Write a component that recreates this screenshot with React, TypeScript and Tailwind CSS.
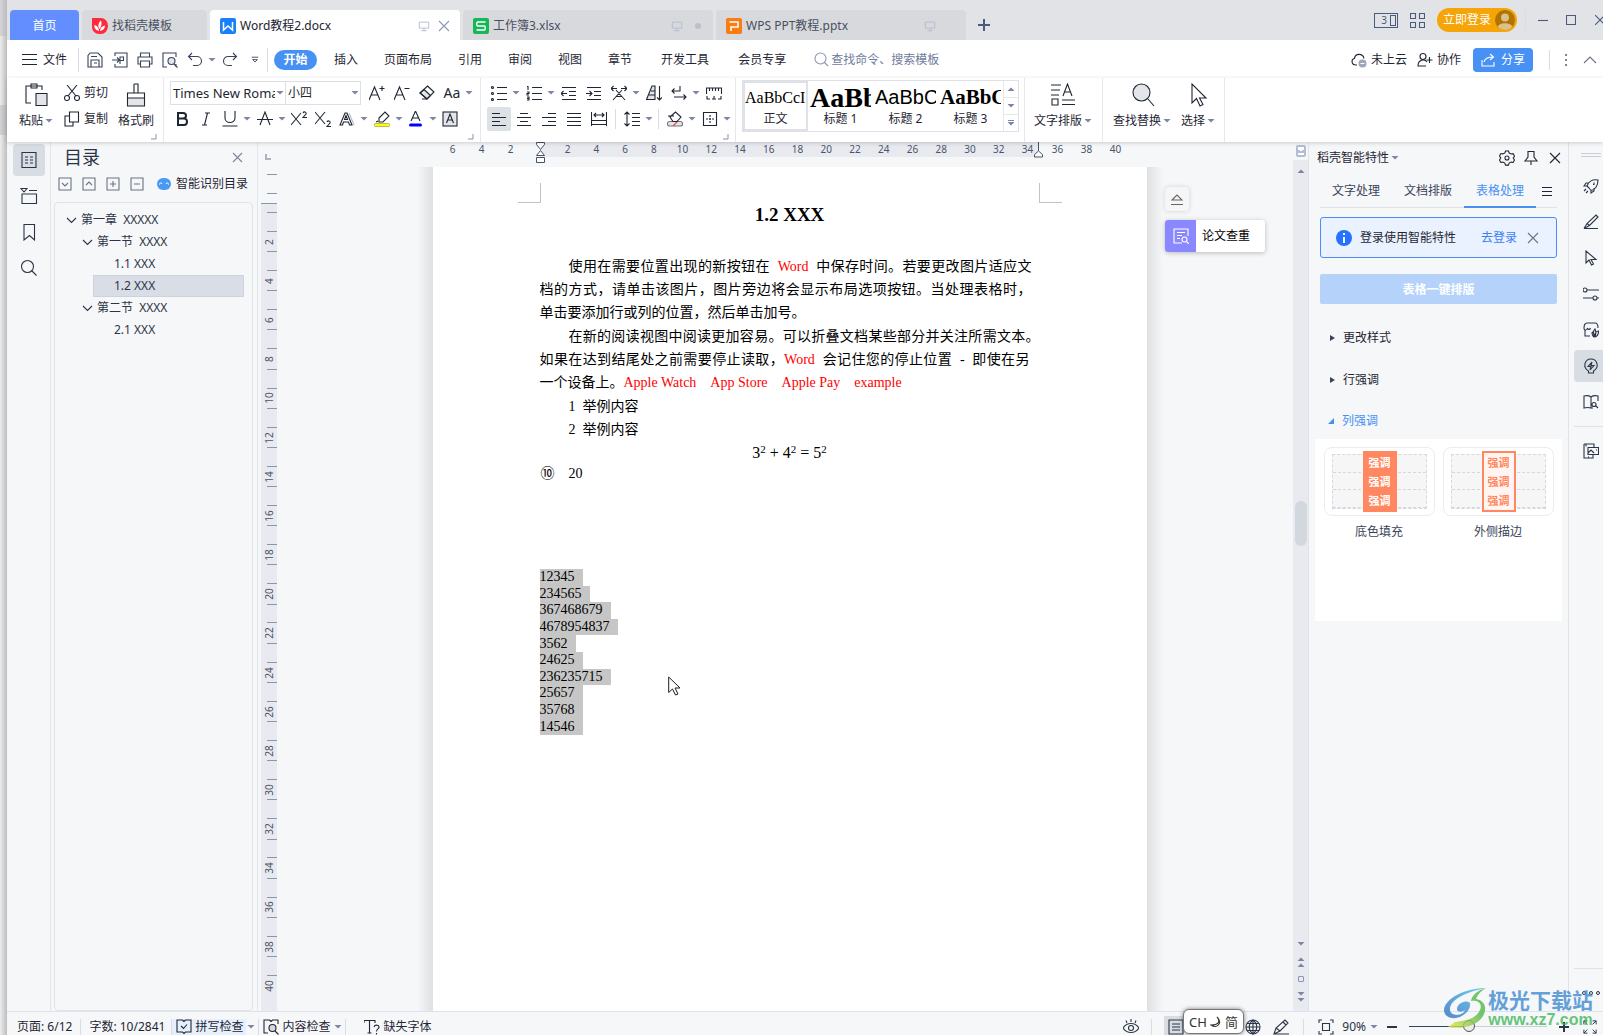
import type { ReactNode } from "react";

type IconProps = {
  d: string;
  size?: number;
  box?: number;
  className?: string;
  children?: ReactNode;
};

const Icon = ({ d, size = 16, box = 16, className = "", children }: IconProps) => (
  <svg
    width={size}
    height={size}
    viewBox={`0 0 ${box} ${box}`}
    fill="none"
    stroke="currentColor"
    strokeWidth="1.1"
    aria-hidden="true"
    className={`shrink-0 ${className}`}
  >
    {children}
    <path d={d} />
  </svg>
);

const Caret = ({ className = "" }: { className?: string }) => (
  <svg width="10" height="6" viewBox="0 0 10 6" aria-hidden="true" className={`shrink-0 fill-[#7a86a3] ${className}`}>
    <path d="M1.500 1h7L5 4.500z" />
  </svg>
);

const Divider = ({ className = "" }: { className?: string }) => (
  <span className={`w-px shrink-0 bg-[#d9dce2] ${className}`} />
);

const Tool = ({ label, caret, active, children }: { label: string; caret?: boolean; active?: boolean; children: ReactNode }) => (
  <button
    type="button"
    aria-label={label}
    className={`flex h-6 shrink-0 items-center ${caret ? "w-[34px]" : "w-6"} ${active ? "rounded-[2px] bg-[#dce1e6]" : ""}`}
  >
    <span className="flex w-6 shrink-0 items-center justify-center">{children}</span>
    {caret && <Caret />}
  </button>
);

const Launcher = () => (
  <svg width="6" height="6" viewBox="0 0 6 6" aria-hidden="true" className="mt-px self-end stroke-[#8c93a3]" fill="none">
    <path d="M5 0v5H0" />
  </svg>
);

/* ---------- title bar ---------- */

const Monitor = () => (
  <Icon d="M1.500 2.500h11v7h-11zM7 9.500v3M4 12.500h6" box={14} size={12} className="text-[#b4bccf]" />
);

const TitleBar = () => (
  <header className="flex h-10 shrink-0 items-end bg-[#e2e3e7] pl-[3px] text-[#48505f]">
    <div className="flex h-[30px] gap-[3px]">
      <button type="button" className="w-[69px] rounded-t-sm bg-[#628eff] pt-px text-white">首页</button>
      <button type="button" className="flex w-[125px] items-center gap-1 rounded-t-sm bg-[#d8d9dd] pt-px pl-[10px]">
        <svg width="16" height="16" viewBox="0 0 16 16" aria-hidden="true">
          <path d="M0 0h9a7 8 0 0 1 0 16H7a7 7 0 0 1-7-7z" fill="#ff2a3c" />
          <path d="M7 13C3 12 2 9 2.500 7 5 7.500 7 9.500 7 13zM7.500 11C5.500 8 6.500 4.500 9 2.500c1 3 .5 6-1.500 8.500zM8 13c0-3 2-5 5-5.500 0 3-2 5-5 5.500z" fill="#fff" />
        </svg>
        找稻壳模板
      </button>
      <div className="flex w-[250px] items-center rounded-t-sm bg-white pt-px pl-[10px] text-[#1c2230]">
        <svg width="16" height="16" viewBox="0 0 16 16" aria-hidden="true">
          <rect width="16" height="16" rx="2" fill="#1a80fa" />
          <path d="M3.500 4v8L8 8l4.500 4V4" fill="none" stroke="#fff" strokeWidth="1.500" />
        </svg>
        <span className="ml-1 flex-1">Word教程2.docx</span>
        <Monitor />
        <button type="button" aria-label="关闭文档" className="mr-[10px] ml-2 text-[#8d97b0]">
          <Icon d="M1 1l10 10M11 1L1 11" box={12} size={12} />
        </button>
      </div>
      <div className="flex w-[250px] items-center rounded-t-sm bg-[#d8d9dd] pt-px pl-[10px]">
        <svg width="16" height="16" viewBox="0 0 16 16" aria-hidden="true">
          <rect width="16" height="16" rx="2" fill="#16b757" />
          <path d="M12.500 4H4.500C3.500 4 3.500 8 4.500 8h7c1 0 1 4 0 4h-8" fill="none" stroke="#fff" strokeWidth="1.500" />
        </svg>
        <span className="ml-1 flex-1">工作簿3.xlsx</span>
        <Monitor />
        <span className="mr-3 ml-3 size-[6px] rounded-full bg-[#b9c0d2]" />
      </div>
      <div className="flex w-[250px] items-center rounded-t-sm bg-[#d8d9dd] pt-px pl-[10px]">
        <svg width="16" height="16" viewBox="0 0 16 16" aria-hidden="true">
          <rect width="16" height="16" rx="2" fill="#f97d12" />
          <path d="M3.500 4h8.500v5H5v4" fill="none" stroke="#fff" strokeWidth="1.500" />
        </svg>
        <span className="ml-1 flex-1">WPS PPT教程.pptx</span>
        <Monitor />
        <span className="w-[30px]" />
      </div>
    </div>
    <button type="button" aria-label="新建" className="flex h-[30px] w-9 items-center justify-center text-[#4a5b7c]">
      <Icon d="M6 0v12M0 6h12" box={12} size={12} className="[stroke-width:2]" />
    </button>
    <div className="flex h-10 min-w-0 flex-1 items-center justify-end overflow-hidden text-[#4a5b7c]">
      <span className="flex h-[15px] w-6 items-center justify-end border border-[#4a5b7c] pr-px text-[10px]">
        3<span className="ml-[3px] h-[11px] w-[6px] border border-[#4a5b7c]" />
      </span>
      <Icon d="M.5.5h5v5h-5zM9.500.5h5v5h-5zM.5 9.500h5v5h-5zM9.500 9.500h5v5h-5z" box={15} size={15} className="ml-3" />
      <button type="button" className="ml-3 flex h-6 w-20 shrink-0 items-center justify-between rounded-full bg-[#f5a508] pr-[2px] pl-[6px] text-white">
        立即登录
        <svg width="20" height="20" viewBox="0 0 20 20" aria-hidden="true">
          <circle cx="10" cy="10" r="10" fill="#b07400" />
          <circle cx="10" cy="7.500" r="4" fill="#dcc08c" />
          <path d="M3 17c0-5 14-5 14 0-4 4-10 4-14 0z" fill="#dcc08c" />
        </svg>
      </button>
      <Divider className="ml-2 h-5 bg-[#c9cbd2]" />
      <button type="button" aria-label="最小化" className="ml-3"><Icon d="M0 5.500h10" box={10} size={10} /></button>
      <button type="button" aria-label="最大化" className="ml-[18px]"><Icon d="M.5.5h9v9h-9z" box={10} size={10} /></button>
      <button type="button" aria-label="关闭" className="-mr-[2px] ml-[19px]"><Icon d="M0 0l10 10M10 0L0 10" box={10} size={10} /></button>
    </div>
  </header>
);

/* ---------- menu row ---------- */

const menus = ["插入", "页面布局", "引用", "审阅", "视图", "章节"];

const MenuRow = () => (
  <div className="flex h-[38px] shrink-0 items-center bg-white pt-px text-[#1f2633]">
    <button type="button" className="flex items-center gap-[6px] pl-[15px]">
      <Icon d="M0 2.500h15M0 7.500h15M0 12.500h15" box={15} size={15} />
      文件
    </button>
    <Divider className="mr-1 ml-[11px] h-6" />
    <div className="flex gap-px text-[#39435a]">
      <Tool label="保存">
        <Icon d="M1 3.500L3 1h8l4 4v10H1zM4 15V8h8v7M4 4.500h6M7 11h3" />
      </Tool>
      <Tool label="输出为PDF">
        <Icon d="M3 4V1h12v14H3v-3M0 8h7M5 5.500L7.500 8 5 10.500M8 12V5h3.500v3.500H8" />
      </Tool>
      <Tool label="打印">
        <Icon d="M3.500 5V1h9v4M3.500 12H1V5h14v7h-2.500M3.500 9h9v6h-9z" />
      </Tool>
      <Tool label="打印预览">
        <Icon d="M5 15H1V1h13v4M14 12v3M12 12l3.500 3.500">
          <circle cx="9.500" cy="9" r="3.500" fill="#e3e5e9" />
        </Icon>
      </Tool>
      <Tool label="撤销" caret>
        <Icon d="M5 1L1.500 4.500 5 8M2 4.500h8a4.500 4.500 0 0 1 0 9H6" />
      </Tool>
      <Tool label="恢复">
        <Icon d="M11 1l3.500 3.500L11 8M14 4.500H6a4.500 4.500 0 0 0 0 9h4" />
      </Tool>
      <Tool label="更多命令">
        <Icon d="M1 1.500h8M2 4.500h6L5 7.500z" box={10} size={8} />
      </Tool>
    </div>
    <Divider className="h-6" />
    <button type="button" className="ml-[6px] h-5 w-[43px] rounded-full bg-[#4791f4] font-bold text-white">开始</button>
    <nav className="ml-[17px] flex gap-[26px]">
      {menus.map((m) => (
        <button type="button" key={m}>{m}</button>
      ))}
    </nav>
    <div className="ml-[29px] flex gap-[29px]">
      <button type="button">开发工具</button>
      <button type="button">会员专享</button>
    </div>
    <label className="ml-7 flex items-center gap-[2px] text-[#8c97b5]">
      <Icon d="M10 10l4 4" box={15} size={15}>
        <circle cx="6.500" cy="6.500" r="5.500" />
      </Icon>
      <input
        aria-label="查找命令、搜索模板"
        placeholder="查找命令、搜索模板"
        className="w-[120px] bg-transparent outline-none placeholder:text-[#6f7b9b]"
      />
    </label>
    <div className="flex flex-1 items-center justify-end">
      <button type="button" className="flex items-center gap-1">
        <Icon d="M6 13H5C0 13 0 7 3.500 6.500 4 1 12 1 13 6.500">
          <circle cx="11.500" cy="11.500" r="4" fill="#9ea6bb" stroke="none" />
          <path d="M9.500 11.500h4" stroke="#fff" />
        </Icon>
        未上云
      </button>
      <button type="button" className="ml-[10px] flex items-center gap-1">
        <Icon d="M9 14H1c0-7 7-7 9-4M12.500 5v6M9.500 8h6">
          <circle cx="6" cy="4.500" r="3" />
        </Icon>
        协作
      </button>
      <button type="button" className="ml-3 flex h-6 w-[60px] items-center justify-center gap-[6px] rounded bg-[#4791f4] text-white">
        <Icon d="M1 7v6h12V9M3 9c1-4 4-5 9-5M9 1l3.500 3L9 7" box={14} size={14} />
        分享
      </button>
      <Divider className="ml-4 h-5" />
      <Icon d="M3 1v2M3 6v2M3 11v2" box={14} size={14} className="ml-[13px] text-[#7d8495] [stroke-width:2]" />
      <button type="button" aria-label="收起功能区" className="mr-[6px] ml-[6px] text-[#6b7280]">
        <Icon d="M1 10l6-6 6 6" box={14} size={14} />
      </button>
    </div>
  </div>
);

/* ---------- ribbon ---------- */

const BigTool = ({ label, caret, children }: { label: string; caret?: boolean; children: ReactNode }) => (
  <button type="button" className="flex shrink-0 flex-col gap-[2px]">
    <span className="flex h-7 w-full items-center justify-center">{children}</span>
    <span className="flex h-5 items-center whitespace-nowrap">
      {label}
      {caret && <Caret className="ml-px" />}
    </span>
  </button>
);

const styles = [
  { name: "正文", sample: "AaBbCcI", css: "text-[16px] font-['Liberation_Serif',serif]" },
  { name: "标题 1", sample: "AaBb", css: "text-[28px] font-bold font-['Liberation_Serif',serif]" },
  { name: "标题 2", sample: "AaBbC", css: "text-[20px] font-['Liberation_Sans',sans-serif]" },
  { name: "标题 3", sample: "AaBbC", css: "text-[21px] font-bold font-['Liberation_Serif',serif]" },
];

const alignments = [
  { label: "左对齐", d: "M1 2.500h8M1 6.500h14M1 10.500h8M1 14.500h14" },
  { label: "居中对齐", d: "M4 2.500h8M1 6.500h14M4 10.500h8M1 14.500h14" },
  { label: "右对齐", d: "M7 2.500h8M1 6.500h14M7 10.500h8M1 14.500h14" },
  { label: "两端对齐", d: "M1 2.500h14M1 6.500h14M1 10.500h14M1 14.500h14" },
  { label: "分散对齐", d: "M.5 1v14M15.500 1v14M3 4h10M5 2L3 4l2 2M11 2l2 2-2 2M.5 9.500h15M.5 13.500h15" },
];

const Ribbon = () => (
  <section className="relative z-10 flex h-16 shrink-0 bg-white text-[#1f2633] shadow-[0_1px_4px_rgba(0,0,0,0.18)]">
    <div className="flex w-[157px] shrink-0 flex-col border-r border-[#e6e8ec] pr-[6px] pl-3">
      <div className="flex h-[55px] justify-between pt-[3px] pr-[3px]">
        <BigTool label="粘贴" caret>
          <Icon d="M6 20H1V3h16v4M6 1h6v4H6z" size={24} box={24}>
            <path d="M11 10.500h11v12H11z" fill="#e3e5e9" />
          </Icon>
        </BigTool>
        <div className="flex flex-col gap-[2px]">
          <button type="button" className="flex h-6 items-center gap-1">
            <Icon d="M3 0l9 11M13 0L4 11">
              <circle cx="3" cy="13" r="2.500" />
              <circle cx="13" cy="13" r="2.500" />
            </Icon>
            剪切
          </button>
          <button type="button" className="flex h-6 items-center gap-1">
            <Icon d="M5.500 1h9v10h-9zM5 5H1v10h8v-4" />
            复制
          </button>
        </div>
        <BigTool label="格式刷">
          <Icon d="M10 1h4v9M10 1v9M3.500 15v-5h17v5" size={24} box={24}>
            <path d="M3.500 15h17v8h-17z" fill="#e3e5e9" />
          </Icon>
        </BigTool>
      </div>
      <Launcher />
    </div>

    <div className="flex w-[317px] shrink-0 flex-col gap-[2px] border-r border-[#e6e8ec] pt-[3px] pr-[6px] pl-[6px]">
      <div className="flex h-6 items-center">
        <div className="flex h-6 w-[195px] border border-[#dcdfe4]">
          <div className="relative w-[115px] border-r border-[#dcdfe4]">
            <select aria-label="字体" className="h-full w-full appearance-none overflow-hidden bg-transparent pr-[10px] pl-[2px] text-[13px] text-clip outline-none">
              <option>Times New Roma</option>
            </select>
            <Caret className="pointer-events-none absolute top-2 right-0" />
          </div>
          <div className="relative flex-1">
            <select aria-label="字号" className="h-full w-full appearance-none bg-transparent pl-[2px] outline-none">
              <option>小四</option>
            </select>
            <Caret className="pointer-events-none absolute top-2 right-0" />
          </div>
        </div>
        <div className="ml-1 flex gap-px">
          <Tool label="增大字号"><Icon d="M0 15L5.500 2 11 15M2 10h7M13 1v5M10.500 3.500h5" /></Tool>
          <Tool label="减小字号"><Icon d="M0 15L5.500 2 11 15M2 10h7M10.500 3.500h5" /></Tool>
          <Tool label="清除格式">
            <Icon d="M8.500 1l6.500 6-7 7-7-6zM8 14H3"><path d="M5 4.500l6.500 6L8 14 1 8z" fill="#e3e5e9" /></Icon>
          </Tool>
          <Tool label="更改大小写" caret><span className="text-[14px]">Aa</span></Tool>
        </div>
      </div>
      <div className="flex h-6 w-[292px] justify-between">
        <Tool label="加粗"><Icon d="M4 2h5c4 0 4 5.500 0 5.500H4zM4 7.500h6c4 0 4 6.500 0 6.500H4z" className="[stroke-width:2]" /></Tool>
        <Tool label="倾斜"><Icon d="M7 2h5M4 14h5M9.500 2l-3 12" /></Tool>
        <Tool label="下划线" caret><Icon d="M3 0v7c0 6 10 6 10 0V0M.5 15h15" /></Tool>
        <Tool label="删除线" caret><Icon d="M3 14L8 1l5 13M0 8.500h16" /></Tool>
        <Tool label="上标"><Icon d="M0 2l10 12M10 2L0 14M12 2c1-2 3.500-1 3 1l-3 3.500h4" /></Tool>
        <Tool label="下标"><Icon d="M0 1l10 12M10 1L0 13M12 11c1-2 3.500-1 3 1l-3 3.500h4" /></Tool>
        <Tool label="文字效果" caret>
          <Icon d="M1 14L6 2h2l5 12h-2.500l-1-3h-5l-1 3zM5.500 8.500h3L7 4.500z"><path d="M10 2l5 12" stroke="#b5bac4" /></Icon>
        </Tool>
        <Tool label="突出显示" caret>
          <Icon d="M5 7l6-6 4 4-6 6H5zM5 7v4M2 11l2-1">
            <rect x=".5" y="12.500" width="15" height="3" rx="1" fill="#ffff00" stroke="#8a8f3a" strokeWidth=".6" />
          </Icon>
        </Tool>
        <Tool label="字体颜色" caret>
          <Icon d="M3 10L7.500 0 12 10M4.500 7h6"><rect x="1" y="12.500" width="13" height="3" rx="1.500" fill="#0000ff" stroke="none" /></Icon>
        </Tool>
        <Tool label="字符底纹">
          <Icon d="M4.500 12L8 3l3.500 9M6 9h4"><rect x="1" y="1" width="14" height="14" fill="#e3e5e9" /></Icon>
        </Tool>
      </div>
      <Launcher />
    </div>

    <div className="flex w-[255px] shrink-0 flex-col gap-[2px] border-r border-[#e6e8ec] pt-[3px] pr-[6px] pl-[6px]">
      <div className="flex h-6 w-[239px] justify-between">
        <Tool label="项目符号" caret>
          <Icon d="M6 2.500h10M6 8.500h10M6 14.500h10">
            <circle cx="1.500" cy="2.500" r="1" /><circle cx="1.500" cy="8.500" r="1" /><circle cx="1.500" cy="14.500" r="1" />
          </Icon>
        </Tool>
        <Tool label="编号" caret>
          <Icon d="M6 2.500h10M6 8.500h10M6 14.500h10M1 1.500h1V5M1 7h2v1.500H1V10h2M1 12h2v3H1M1 13.500h2" />
        </Tool>
        <Tool label="减少缩进"><Icon d="M1 2.500h14M8 6.500h7M8 10.500h7M1 14.500h14M0 8.500h6M2.500 6L0 8.500 2.500 11" /></Tool>
        <Tool label="增加缩进"><Icon d="M1 2.500h14M8 6.500h7M8 10.500h7M1 14.500h14M0 8.500h6M3.500 6L6 8.500 3.500 11" /></Tool>
        <Tool label="中文版式" caret><Icon d="M2 15l9-10M14 15L5 5M5 11.500h6M0 3.500h6M2.500 1L0 3.500 2.500 6M10 3.500h6M13.500 1L16 3.500 13.500 6" /></Tool>
        <Tool label="排序">
          <Icon d="M13.500 1v14M11 12.500l2.500 2.500 2.500-2.500M5 6h4M3 10h6"><path d="M.5 14.500L6 1h3v13.500z" fill="#e3e5e9" /></Icon>
        </Tool>
        <Tool label="换行" caret><Icon d="M9 1v5H1M3.500 3.500L1 6l2.500 2.500M3 12h12M12.500 9.500L15 12l-2.500 2.500" /></Tool>
        <Tool label="显示标尺"><Icon d="M.5 9V3h15v6M3.500 3v3M6.500 3v3M9.500 3v3M12.500 3v3M1 11v3h3M6 14h1.500M8 11v3h2M15 11v3h-3" /></Tool>
      </div>
      <div className="flex h-6 w-[245px] items-center justify-between">
        {alignments.map((a, i) => (
          <Tool key={a.label} label={a.label} active={i === 0}>
            <Icon d={a.d} />
          </Tool>
        ))}
        <Divider className="mx-[3px] h-5" />
        <Tool label="行距" caret><Icon d="M3 1v14M.5 3.500L3 1l2.500 2.500M.5 12.500L3 15l2.500-2.500M8 2.500h8M8 6.500h8M8 10.500h8M8 14.500h8" /></Tool>
        <Divider className="mx-[3px] h-5" />
        <Tool label="底纹颜色" caret>
          <Icon d="M3 6l5.500-5L14 6l-4 4.500H6zM1 5h6">
            <rect x=".5" y="10.500" width="15" height="4.500" rx="2" fill="#e3e5e9" stroke="#77757c" />
            <path d="M6 15l5-5" stroke="#e5484d" />
          </Icon>
        </Tool>
        <Tool label="边框" caret>
          <Icon d="M1.500 1.500h13v13h-13zM8 4v2M8 7v2M8 10v2M4 8h2M7 8h2M10 8h2" />
        </Tool>
      </div>
      <Launcher />
    </div>

    <div className="flex w-[289px] shrink-0 border-r border-[#e6e8ec] pt-[2px] pl-[6px]">
      <div className="flex h-[52px] w-[277px] border border-[#dfe1e6]">
        {styles.map((s, i) => (
          <button
            type="button"
            key={s.name}
            className={`flex w-[65px] shrink-0 flex-col overflow-hidden border-2 ${i === 0 ? "border-[#dfe1e6]" : "border-transparent"}`}
          >
            <span className={`flex h-7 w-full items-center overflow-hidden pt-[3px] leading-[25px] text-black ${s.css}`}>{s.sample}</span>
            <span className="w-full text-center leading-5">{s.name}</span>
          </button>
        ))}
        <div className="flex flex-1 flex-col divide-y divide-[#e6e8ec] border-l border-[#e6e8ec]">
          <button type="button" aria-label="上一行" className="flex flex-1 items-center justify-center"><Caret className="rotate-180" /></button>
          <button type="button" aria-label="下一行" className="flex flex-1 items-center justify-center"><Caret /></button>
          <button type="button" aria-label="更多样式" className="flex flex-1 flex-col items-center justify-center">
            <span className="h-px w-[6px] bg-[#7a86a3]" /><Caret />
          </button>
        </div>
      </div>
    </div>

    <div className="flex w-[78px] shrink-0 justify-center border-r border-[#e6e8ec] pt-[3px]">
      <BigTool label="文字排版" caret>
        <Icon d="M0 2h10M0 7h9M0 12h8M12 13l4.500-12L21 13M13.500 9h6M1 16h6v6H1zM11 17h13M11 21.500h13" size={24} box={24} />
      </BigTool>
    </div>
    <div className="flex w-[122px] shrink-0 justify-between border-r border-[#e6e8ec] pt-[3px] pr-2 pl-[10px]">
      <BigTool label="查找替换" caret>
        <Icon d="M17 16l6 7" size={24} box={24}><circle cx="10.500" cy="9.500" r="8.500" fill="#e3e5e9" /></Icon>
      </BigTool>
      <BigTool label="选择" caret>
        <Icon d="M6 1v19l4.500-4.500L14 23l3-1.500-3.500-6.500H20z" size={24} box={24} />
      </BigTool>
    </div>
  </section>
);

/* ---------- left side ---------- */

const rail = [
  { label: "目录", d: "M2 1.500h14v15H2zM5 6h3M10 6h3M5 9h3M10 9h3M5 12h3M10 12h3" },
  { label: "章节", d: "M2 7h14.500v9.500H2zM2 7v4M9 3.500h8M1 1.500h6L4 5z" },
  { label: "书签", d: "M4 1.500h10.500V17l-5-4.500L4 17z" },
];

const outline = [
  { text: "第一章  XXXXX", level: "ml-1", open: true },
  { text: "第一节  XXXX", level: "ml-5", open: true },
  { text: "1.1 XXX", level: "ml-[38px]" },
  { text: "1.2 XXX", level: "ml-[38px]", active: true },
  { text: "第二节  XXXX", level: "ml-5", open: true },
  { text: "2.1 XXX", level: "ml-[38px]" },
];

const foldIcons = [
  { label: "展开", d: "M1 1h12v12H1zM4 6l3 3 3-3" },
  { label: "收起", d: "M1 1h12v12H1zM4 8l3-3 3 3" },
  { label: "升级", d: "M1 1h12v12H1zM4 7h6M7 4v6" },
  { label: "降级", d: "M1 1h12v12H1zM4 7h6" },
];

const LeftSide = () => (
  <aside className="flex shrink-0 text-[#2c3547]">
    <div className="flex w-11 flex-col items-center gap-1 border-r border-[#e2e5ea] pt-[2px]">
      {rail.map((r, i) => (
        <button type="button" key={r.label} aria-label={r.label} className={`flex size-8 items-center justify-center rounded-sm ${i === 0 ? "bg-[#d8dde4]" : ""}`}>
          <Icon d={r.d} size={18} box={18} />
        </button>
      ))}
      <button type="button" aria-label="查找" className="flex size-8 items-center justify-center">
        <Icon d="M11.500 11.500l5 5" size={18} box={18}><circle cx="7.500" cy="7.500" r="6" /></Icon>
      </button>
    </div>
    <div className="flex w-[207px] flex-col border-r border-[#e2e5ea] pr-1 pl-[3px]">
      <div className="flex h-[30px] items-center justify-between pr-[10px] pl-[10px]">
        <h2 className="text-[18px] leading-[30px]">目录</h2>
        <button type="button" aria-label="关闭目录" className="text-[#7d8495]"><Icon d="M1 1l9 9M10 1l-9 9" box={11} size={11} /></button>
      </div>
      <div className="mb-[7px] flex h-[23px] items-center pt-px pl-1 text-[#6b7280]">
        {foldIcons.map((f) => (
          <button type="button" key={f.label} aria-label={f.label} className="flex w-6">
            <Icon d={f.d} box={14} size={14} />
          </button>
        ))}
        <button type="button" className="ml-[3px] flex items-center gap-[5px] whitespace-nowrap text-[#1f2633]">
          <svg width="14" height="12" viewBox="0 0 14 12" aria-hidden="true">
            <rect width="14" height="12" rx="6" fill="#4a9af5" />
            <path d="M2.500 6.500c0-2 2-2 2.500-.5M9 6c.5-1.500 2.500-1.500 2.500.5" stroke="#fff" fill="none" />
          </svg>
          智能识别目录
        </button>
      </div>
      <ul className="flex-1 rounded-sm border border-[#e0e3e8] pt-[6px] pr-2">
        {outline.map((o) => (
          <li key={o.text} className={o.level}>
            <button
              type="button"
              className={`flex h-[22px] w-full items-center border whitespace-pre ${o.active ? "border-[#cdd3dc] bg-[#d9dde5]" : "border-transparent"}`}
            >
              {o.open ? <Icon d="M2 4l4.500 4.500L11 4" box={12} size={12} className="mr-1 ml-[5px]" /> : <span className="w-[20px]" />}
              {o.text}
            </button>
          </li>
        ))}
      </ul>
    </div>
  </aside>
);

/* ---------- document ---------- */

const vMarks = Array.from({ length: 20 }, (_, i) => (i + 1) * 2);
const hMarks = Array.from({ length: 17 }, (_, i) => (i + 1) * 2);

const VerticalRuler = () => (
  <div className="ml-[3px] flex w-4 shrink-0 flex-col items-end overflow-hidden text-[10px] text-[#4a556b]">
    <span className="mt-3 mr-[6px] size-[6px] shrink-0 border-b-2 border-l-2 border-[#adb3c0]" />
    <span className="mt-[14px] h-px w-[10px] shrink-0 bg-[#8b95ac]" />
    <span className="mt-[18px] h-px w-[10px] shrink-0 bg-[#8b95ac]" />
    <div className="mt-[9px] flex w-4 flex-1 flex-col overflow-hidden border-t border-[#8b95ac] bg-[#e8eaf0] pt-2">
      <div className="flex h-[783px] shrink-0 flex-col justify-between">
        {vMarks.map((n) => (
          <div key={n} className="flex h-[39px] shrink-0 flex-col items-end">
            <span className="h-px w-[10px] bg-[#8b95ac]" />
            <span className="mt-[18px] h-px w-[10px] bg-[#8b95ac]" />
            <span className="mt-px flex h-5 w-4 -rotate-90 items-center justify-center leading-4">{n}</span>
          </div>
        ))}
      </div>
    </div>
  </div>
);

const HorizontalRuler = () => (
  <div className="relative mx-auto flex h-[25px] w-[714px] shrink-0 text-center text-[10px] leading-[15px] text-[#4a556b]">
    <div className="flex w-[107px] gap-[9px] pl-[10px]">
      {[6, 4, 2].map((n) => (
        <span key={n} className="w-5">{n}</span>
      ))}
    </div>
    <div className="flex h-[15px] w-[498px] justify-between bg-[#e8eaf0] pl-[18px]">
      {hMarks.map((n) => (
        <span key={n} className="w-5">{n}</span>
      ))}
    </div>
    <div className="flex gap-[9px] pl-[10px]">
      {[36, 38, 40].map((n) => (
        <span key={n} className="w-5">{n}</span>
      ))}
    </div>
    <svg width="11" height="22" viewBox="0 0 11 22" aria-hidden="true" className="absolute top-0 left-[102px]" fill="#fff" stroke="#4a5268">
      <path d="M1.500.5h8v2l-4 5-4-5zM5.500 8.500l4 5h-8zM1.500 15.500h8v5h-8z" />
    </svg>
    <svg width="11" height="16" viewBox="0 0 11 16" aria-hidden="true" className="absolute top-0 left-[600px]" fill="#fff" stroke="#4a5268">
      <path d="M5.500 0v9M5.500 9l4 3.500v2.500h-8v-2.500z" />
    </svg>
  </div>
);

const numbers = ["12345", "234565", "367468679", "4678954837", "3562", "24625", "236235715", "25657", "35768", "14546"];

const Line = ({ first, children }: { first?: boolean; children: ReactNode }) => (
  <span className={`block whitespace-nowrap [text-align-last:justify] ${first ? "pl-[29px]" : ""}`}>{children}</span>
);

const Page = () => (
  <article className="relative mx-auto w-[714px] flex-1 bg-white px-[107px] pt-4 font-['Liberation_Serif','Noto_Sans_CJK_SC',serif] text-[14px] leading-[23px] text-black">
    <span className="absolute top-0 bottom-0 -left-4 w-4 bg-linear-to-l from-[#dfe0e2] to-[#f6f7f9]" />
    <span className="absolute top-0 -right-4 bottom-0 w-4 bg-linear-to-r from-[#dfe0e2] to-[#f6f7f9]" />
    <div className="-mx-[22px] flex h-[20px] justify-between">
      <span className="w-[23px] border-r border-b border-[#c3c3c3]" />
      <span className="w-[23px] border-b border-l border-[#c3c3c3]" />
    </div>
    <h1 className="mb-7 text-center text-[19px] leading-[23px] font-bold">1.2 XXX</h1>
    <p className="mb-px w-[492px] pt-px">
      <Line first>使用在需要位置出现的新按钮在&nbsp; <span className="text-[#ff0000]">Word</span>&nbsp; 中保存时间。若要更改图片适应文</Line>
      <Line>档的方式，请单击该图片，图片旁边将会显示布局选项按钮。当处理表格时，</Line>
      <span>单击要添加行或列的位置，然后单击加号。</span>
    </p>
    <p className="mb-px">
      <Line first>在新的阅读视图中阅读更加容易。可以折叠文档某些部分并关注所需文本。</Line>
      <span className="block w-[490px]">
        <Line>如果在达到结尾处之前需要停止读取，<span className="text-[#ff0000]">Word</span>&nbsp; 会记住您的停止位置&nbsp; -&nbsp; 即使在另</Line>
      </span>
      <span>
        一个设备上。<span className="text-[#ff0000]">Apple Watch　App Store　Apple Pay　example</span>
      </span>
    </p>
    <p className="pl-[29px]">1&nbsp; 举例内容</p>
    <p className="pl-[29px]">2&nbsp; 举例内容</p>
    <p className="text-center text-[16px]">
      3<sup className="text-[11px]">2</sup> + 4<sup className="text-[11px]">2</sup> = 5<sup className="text-[11px]">2</sup>
    </p>
    <p className="flex gap-[14px] pl-px leading-5"><span className="w-[14px]">⑩</span>20</p>
    <div className="mt-[85px] flex h-[166px] flex-col items-start leading-4">
      {numbers.map((n) => (
        <span key={n} className="flex flex-1 items-center bg-[#c6c6c6] pr-2">{n}</span>
      ))}
    </div>
    <svg width="13" height="20" viewBox="0 0 13 20" aria-hidden="true" className="absolute top-[509px] left-[235px]" fill="#fff" stroke="#1c1c28">
      <path d="M.7 1v15.500l3.800-3.500 3 6 2.500-1-3-6H12z" />
    </svg>
  </article>
);

const Scrollbar = () => (
  <div className="flex w-[15px] shrink-0 flex-col items-center bg-[#e8eaf0] text-[#8b96b2]">
    <span className="flex h-[18px] w-full items-center justify-center bg-[#f6f7f9]">
      <svg width="10" height="12" viewBox="0 0 10 12" aria-hidden="true">
        <rect width="10" height="12" rx="2" fill="#b4bdd2" />
        <path d="M2 2h6v3H6v1H4V5H2zM2 8h6v2H2z" fill="#fff" />
      </svg>
    </span>
    <Caret className="mt-2 rotate-180" />
    <div className="flex w-full flex-1 flex-col items-center pt-[327px]">
      <span className="h-[45px] w-3 rounded-full bg-[#d3d7de]" />
    </div>
    <div className="flex h-[70px] flex-col items-center justify-between pb-2">
      <Caret />
      <span><Caret className="rotate-180" /><Caret className="rotate-180" /></span>
      <span className="size-[6px] rounded-[1px] border border-[#8b96b2]" />
      <span><Caret /><Caret /></span>
    </div>
  </div>
);

const Document = () => (
  <main className="relative flex min-w-0 flex-1 overflow-hidden">
    <VerticalRuler />
    <div className="flex min-w-0 flex-1 flex-col pl-[9px]">
      <HorizontalRuler />
      <Page />
    </div>
    <div className="absolute top-[45px] right-[43px] flex flex-col items-start gap-[9px] text-black">
      <button type="button" aria-label="收起" className="flex size-6 items-center justify-center rounded-sm bg-[#f6f6f6] text-[#666] shadow-[0_0_5px_rgba(0,0,0,0.15)]">
        <Icon d="M1 7l5-5 5 5zM0 11.500h12" box={12} size={12} />
      </button>
      <button type="button" className="flex h-8 w-[100px] items-center overflow-hidden rounded-[3px] bg-white shadow-[0_1px_5px_rgba(0,0,0,0.25)]">
        <span className="flex h-8 w-[31px] items-center justify-center bg-[#8a88ff] text-white">
          <Icon d="M9 15H1V1h14v7M4 4.500h8M4 7.500h5M4 10.500h3M13.500 13.500L16 16"><circle cx="11.500" cy="11.500" r="2.500" /></Icon>
        </span>
        <span className="pl-[6px]">论文查重</span>
      </button>
    </div>
    <Scrollbar />
  </main>
);

/* ---------- right side ---------- */

const Sample = ({ filled, label }: { filled?: boolean; label: string }) => (
  <button type="button" className="flex w-[111px] flex-col gap-2 text-[#39435a]">
    <span className="flex h-[69px] w-full items-center justify-center rounded-lg border border-[#ececec] bg-white">
      <span className="relative grid h-[55px] w-[95px] grid-rows-3 divide-y divide-dashed divide-[#d5d8e2] border border-dashed border-[#d5d8e2] bg-[#f6f6f6]">
        <span /><span /><span />
        <span
          className={`absolute -top-1 left-[30px] flex h-[61px] w-[34px] flex-col items-center justify-around border-2 border-[#ff8860] text-[11px] leading-4 font-bold ${
            filled ? "bg-[#ff8860] text-white" : "bg-[#fff4f1] text-[#ff8860]"
          }`}
        >
          <span>强调</span><span>强调</span><span>强调</span>
        </span>
      </span>
    </span>
    <span className="w-full pt-px text-center leading-[14px]">{label}</span>
  </button>
);

const SmartPanel = () => (
  <aside className="flex w-[261px] shrink-0 flex-col border-r border-l border-[#e0e3ea] text-[#1f2633]">
    <div className="flex h-[31px] items-center pr-[5px] pl-2">
      <button type="button" className="flex flex-1 items-center gap-px">稻壳智能特性<Caret /></button>
      <button type="button" aria-label="设置"><Icon d="M6.500 1h3l.7 2 2 1 2-.4 1.300 2.600-1.300 1.800 1.300 2-1.400 2.500-2-.4-2 1-.6 2h-3l-.7-2-2-1-2 .4L.5 10l1.300-2L.5 6l1.400-2.500 2 .4 2-1z"><circle cx="8" cy="8" r="2" /></Icon></button>
      <button type="button" aria-label="固定" className="ml-2"><Icon d="M5 1.500h6V7l3 4H2l3-4zM8 11v4" /></button>
      <button type="button" aria-label="关闭" className="ml-2"><Icon d="M3 3l10 10M13 3L3 13" /></button>
    </div>
    <div className="mx-[11px] flex h-[35px] border-b border-[#dfe2ec]">
      <button type="button" className="w-[72px] pt-[2px] text-[#39435a]">文字处理</button>
      <button type="button" className="w-[72px] pt-[2px] text-[#39435a]">文档排版</button>
      <button type="button" className="-mb-px w-[72px] border-b-2 border-[#4791f4] pt-[2px] text-[#4791f4]">表格处理</button>
      <button type="button" aria-label="更多" className="ml-auto pt-[2px] pr-1"><Icon d="M0 1.500h10M0 5.500h10M0 9.500h10" box={11} size={11} /></button>
    </div>
    <div className="mx-[11px] mt-[9px] flex h-[41px] items-center rounded-[3px] border border-[#4f8df5] bg-[#ebf2ff] pl-[15px]">
      <svg width="16" height="16" viewBox="0 0 16 16" aria-hidden="true">
        <circle cx="8" cy="8" r="8" fill="#2472ff" />
        <path d="M8 3v2M8 7v6" stroke="#fff" strokeWidth="2" />
      </svg>
      <span className="ml-2 flex-1">登录使用智能特性</span>
      <a href="#login" className="text-[#3a7ef5]">去登录</a>
      <button type="button" aria-label="关闭提示" className="mr-[17px] ml-[10px] text-[#6b7488]"><Icon d="M1 1l10 10M11 1L1 11" box={12} size={12} /></button>
    </div>
    <button type="button" disabled className="mx-[11px] mt-4 h-[30px] rounded-[2px] bg-[#b4d2fa] pt-px font-bold text-white">表格一键排版</button>
    <div className="mt-[13px] flex flex-col">
      {["更改样式", "行强调"].map((t) => (
        <button type="button" key={t} className="flex h-[42px] items-center gap-2 pl-[21px]">
          <svg width="5" height="6" viewBox="0 0 5 6" aria-hidden="true" fill="#39435a"><path d="M0 0l5 3-5 3z" /></svg>
          {t}
        </button>
      ))}
      <button type="button" className="flex h-[38px] items-center gap-2 pt-[2px] pl-[19px] text-[#4791f4]">
        <svg width="6" height="6" viewBox="0 0 6 6" aria-hidden="true" fill="#4791f4"><path d="M6 0v6H0z" /></svg>
        列强调
      </button>
    </div>
    <div className="mx-[6px] flex h-[182px] items-start justify-center gap-2 bg-white pt-2">
      <Sample filled label="底色填充" />
      <Sample label="外侧描边" />
    </div>
  </aside>
);

const tools = [
  { label: "助手", d: "M6 10L4 8c1-4 5-7 11-6 0 6-3 10-7 10.500L6 10zM4 8H1l2-3 3 0M8 12v3l3-2v-3M3 11l-2 2M5 13l-2 2M11 4.500v2h-1" },
  { label: "样式", d: "M1 14.500h14M1 14.500l3-5L13 1l2 2-8.500 8.500-5.500 3M4 9.500l2.500 2" },
  { label: "选择", d: "M3 1v12l3-3 2.500 5 2-1L8 9.500h5z" },
  { label: "属性", d: "M4 4h12M0 12h10M14 12h2M0 4a2 2 0 1 0 4 0 2 2 0 1 0-4 0M10 12a2 2 0 1 0 4 0 2 2 0 1 0-4 0" },
  { label: "稻壳", d: "M2 8v6h5M1 6c0-3 1-5 3-5h8c2 0 3 2 3 5M1 6c0 3 3 2.500 3.500 0 .5 2 2.500 2 3 0M9 10c0 3 1 5 3 5 3-1 3.500-3 3.500-6-2 0-3.500 2-3.500 6 1-3 1-6 0-8-2 2-2 5 0 8M9 10c1 0 2 1 3 4" },
  { label: "智能特性", d: "M5.500 13C-1 9 2 1 8 1s9 8 2.500 12v2h-5zM9 4L5 8.500h3L7 12l4-4.500H8z" },
  { label: "阅读", d: "M8 14V3C6 1.500 3 1.500 1 2v12c2-.5 5-.5 7 0zM8 3c2-1.500 5-1.500 7-1v5M15 14l-2-2M9 10.500a2 2 0 1 0 4 0 2 2 0 1 0-4 0M10 14H8" },
];

const RightRail = () => (
  <aside className="flex w-[34px] shrink-0 flex-col overflow-hidden pl-[5px] text-[#2c3547]">
    <span className="mt-[11px] mb-[13px] ml-[7px] h-1 w-5 shrink-0 border-t border-b border-[#c8ccd4]" />
    {tools.map((t) => (
      <button
        type="button"
        key={t.label}
        aria-label={t.label}
        className={`mb-1 flex h-8 shrink-0 items-center pl-[9px] ${t.label === "智能特性" ? "rounded-l-sm bg-[#d8dde4]" : ""}`}
      >
        <Icon d={t.d} />
      </button>
    ))}
    <span className="mt-1 h-px bg-[#dfe2e8]" />
    <button type="button" aria-label="图片" className="mt-4 flex pl-[9px]"><Icon d="M3 3.500V1h8v3M1 1v14h9v-3M1 1h2M5 4.500h10.500v7H5zM5 10l3-3 3 3M13 7h1M5 14h1" /></button>
    <span className="mt-auto h-px bg-[#dfe2e8]" />
    <span className="flex gap-[3px] pt-[22px] pb-4 pl-2">
      <i className="size-1 rounded-full border border-[#2c3547]" />
      <i className="size-1 rounded-full border border-[#2c3547]" />
      <i className="size-1 rounded-full border border-[#2c3547]" />
    </span>
  </aside>
);

/* ---------- status bar ---------- */

const StatusBar = () => (
  <footer className="flex h-6 shrink-0 items-center border-t border-[#dfe2ea] pt-[6px] text-[#1f2633]">
    <span className="pl-[10px]">页面: 6/12</span>
    <Divider className="mx-2 h-4" />
    <span>字数: 10/2841</span>
    <Divider className="mr-0 ml-[6px] h-4" />
    <button type="button" className="flex items-center whitespace-nowrap">
      <span className="flex items-center gap-[3px] bg-[#e6effc] pr-[3px] pl-1">
        <Icon d="M8 2.500L6.500 1H1v12h5.500L8 14.500 9.500 13H15V1H9.500zM5 7l2.500 2.500L11 5.500" />
        拼写检查
      </span>
      <Caret />
    </button>
    <Divider className="mr-1 ml-[2px] h-4" />
    <button type="button" className="flex items-center gap-[3px] whitespace-nowrap">
      <Icon d="M8 2.500L6.500 1H1v13h4M8 2.500L9.500 1H15v4M12 12l3.500 3.500"><circle cx="9.500" cy="9" r="3.500" fill="#d5d9e0" /></Icon>
      内容检查
      <Caret />
    </button>
    <Divider className="mr-[18px] ml-[2px] h-4" />
    <button type="button" className="flex items-center gap-[3px] whitespace-nowrap">
      <Icon d="M0 4V1.500h11V4M5.500 1.500V14M3.500 14h4M10 8c1-3 5.500-2 5 .5-.5 1.500-2.500 1.500-2.500 4M12.500 14v1.500" />
      缺失字体
    </button>

    <div className="flex flex-1 items-center justify-end text-[#2c3547]">
      <Icon d="M0 9c4-6 12-6 16 0-4 6-12 6-16 0zM8 0v3M3 1.500l1 2.500M13 1.500l-1 2.500"><circle cx="8" cy="9" r="2.500" /></Icon>
      <Divider className="mx-3 h-4" />
      <span className="flex h-[22px] w-[97px] items-center bg-linear-to-r from-[#d8dde4] from-20% to-transparent to-20% pl-1">
        <Icon d="M1 1h14v14H1zM4 5h8M4 8h8M4 11h8" />
        <span className="flex-1" />
        <Icon d="M1 8h14M8 1v14M2 4.500h12M2 11.500h12M8 1c-5 4-5 10 0 14M8 1c5 4 5 10 0 14"><circle cx="8" cy="8" r="7" /></Icon>
      </span>
      <Icon d="M2 15h14M1 15l2-6 9-8 3 3-8 8zM3 9l4 3M10 3l3 3" className="ml-3" />
      <Divider className="mx-[14px] h-4" />
      <Icon d="M1 4V1h3M12 1h3v3M15 12v3h-3M4 15H1v-3M4.500 4.500h7v7h-7z" />
      <button type="button" className="ml-2 flex items-center gap-[3px]">90%<Caret /></button>
      <button type="button" aria-label="缩小" className="ml-[8px]"><Icon d="M0 5h10" box={10} size={10} className="[stroke-width:2]" /></button>
      <input
        type="range"
        aria-label="显示比例"
        min={0}
        max={100}
        defaultValue={43}
        className="mx-3 h-3 w-[138px] appearance-none bg-transparent [&::-webkit-slider-runnable-track]:h-px [&::-webkit-slider-runnable-track]:bg-linear-to-r [&::-webkit-slider-runnable-track]:from-[#39435a] [&::-webkit-slider-runnable-track]:from-45% [&::-webkit-slider-runnable-track]:to-[#c9ced8] [&::-webkit-slider-runnable-track]:to-45% [&::-webkit-slider-thumb]:-mt-[6px] [&::-webkit-slider-thumb]:size-3 [&::-webkit-slider-thumb]:appearance-none [&::-webkit-slider-thumb]:rounded-full [&::-webkit-slider-thumb]:border [&::-webkit-slider-thumb]:border-[#555] [&::-webkit-slider-thumb]:bg-[#ececec]"
      />
      <button type="button" aria-label="放大"><Icon d="M0 5h10M5 0v10" box={10} size={10} className="[stroke-width:2]" /></button>
      <button type="button" aria-label="全屏" className="mr-[6px] ml-[14px]"><Icon d="M1 5V1h4M1 1l4 4M11 1h4v4M15 1l-4 4M15 11v4h-4M15 15l-4-4M5 15H1v-4M1 15l4-4" size={14} /></button>
    </div>
  </footer>
);

const Watermark = () => (
  <div className="pointer-events-none absolute right-[10px] bottom-[6px] z-20 flex items-center gap-px font-bold opacity-80">
    <svg width="43" height="42" viewBox="0 0 43 42" aria-hidden="true">
      <defs>
        <linearGradient id="wave-blue" x1="0" y1="1" x2="1" y2="0">
          <stop offset="0" stopColor="#2f6fc0" />
          <stop offset="1" stopColor="#4fc3f0" />
        </linearGradient>
        <linearGradient id="wave-green" x1="0" y1="1" x2="1" y2="0">
          <stop offset="0" stopColor="#e6e64a" />
          <stop offset="0.600" stopColor="#55b84a" />
        </linearGradient>
      </defs>
      <path d="M42 1C22 1 1 11 0 23c0 7 8 10 16 7 7-3 11-9 10-14-5-4-13 1-13 6 0 3 4 4 8 1-2 6-14 7-15 0C5 13 22 5 42 1z" fill="url(#wave-blue)" />
      <path d="M42 1C34 3 28 8 27 14c6-1 12 2 9 9-4 9-15 11-25 12l-7 5c15 3 34-2 37-16 1-7-3-11-9-12 2-5 5-8 10-11z" fill="url(#wave-green)" />
    </svg>
    <div className="text-center">
      <div className="font-['Noto_Sans_CJK_SC',sans-serif] text-[21px] leading-6 text-[#3f8bd0]">极光下载站</div>
      <div className="font-['Liberation_Sans',sans-serif] text-[16px] leading-[18px] text-[#43b85c]">www.xz7.com</div>
    </div>
  </div>
);

const App = () => (
  <div className="relative flex h-screen w-full overflow-hidden bg-white font-['Noto_Sans','Noto_Sans_CJK_SC',sans-serif] text-xs leading-4">
    <div className="flex w-[7px] shrink-0 flex-col bg-linear-to-r from-[#ededed] to-[#bdbdbd]">
      <span className="h-9 bg-linear-to-r from-[#d5d5d7] to-[#bcbcbe]" />
      <span className="mt-[69px] h-[30px] bg-linear-to-r from-[#d2d3d5] to-[#b4b5b6]" />
    </div>
    <div className="flex min-w-0 flex-1 flex-col bg-[#f6f7f9]">
      <TitleBar />
      <MenuRow />
      <Ribbon />
      <div className="flex min-h-0 flex-1">
        <LeftSide />
        <Document />
        <SmartPanel />
        <RightRail />
      </div>
      <StatusBar />
    </div>
    <div className="absolute right-[359px] bottom-px z-20 flex h-[25px] w-[61px] items-center justify-center gap-[3px] rounded-md border border-[#777] bg-white text-[13px] text-[#333] shadow-[0_0_4px_rgba(0,0,0,0.5)]">
      CH
      <Icon d="M7 1c4 5 1 8-6 8 6 4 12-2 6-8z" box={12} size={12} />
      简
    </div>
    <Watermark />
  </div>
);

export default App;
